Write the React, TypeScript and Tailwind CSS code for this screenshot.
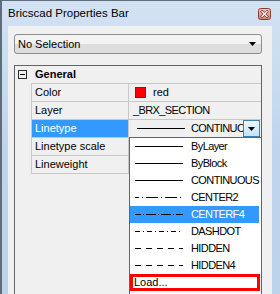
import React from 'react'

type LineType = { name: string; dash?: string; offset?: number; active?: boolean }

const lineTypes: LineType[] = [
  { name: 'ByLayer' },
  { name: 'ByBlock' },
  { name: 'CONTINUOUS' },
  { name: 'CENTER2', dash: '12 3 1 3', offset: 8 },
  { name: 'CENTERF4', dash: '10 2 1 2', offset: 4, active: true },
  { name: 'DASHDOT', dash: '5 3 1 3' },
  { name: 'HIDDEN', dash: '6 5' },
  { name: 'HIDDEN4', dash: '6 5' },
]

function LineSample({ dash, offset }: { dash?: string; offset?: number }) {
  return (
    <svg width="48" height="3" className="shrink-0" shapeRendering="crispEdges">
      <line
        x1="0"
        y1="1.5"
        x2="48"
        y2="1.5"
        stroke="#000"
        strokeWidth="1"
        strokeDasharray={dash}
        strokeDashoffset={offset}
      />
    </svg>
  )
}

function CloseButton() {
  return (
    <svg width="13" height="12" viewBox="0 0 13 12">
      <defs>
        <linearGradient id="cls" x1="0" y1="0" x2="0" y2="1">
          <stop offset="0" stopColor="#f3c6bc" />
          <stop offset="1" stopColor="#d9806f" />
        </linearGradient>
      </defs>
      <rect x="0.5" y="0.5" width="12" height="11" rx="2" fill="url(#cls)" stroke="#8a3b30" />
      <path d="M4 3.5 L9 8.5 M9 3.5 L4 8.5" stroke="#5a2a24" strokeWidth="2.6" strokeLinecap="square" />
      <path d="M4 3.5 L9 8.5 M9 3.5 L4 8.5" stroke="#fff" strokeWidth="1.3" strokeLinecap="square" />
    </svg>
  )
}

function Row({
  label,
  active,
  children,
}: {
  label: string
  active?: boolean
  children?: React.ReactNode
}) {
  return (
    <div className="flex h-[18px] border-b border-[#c8c8c8]">
      <div
        className={`flex w-[97px] shrink-0 items-center border-r border-[#c8c8c8] pl-[3px] ${
          active ? 'bg-[#3399ff] text-white' : ''
        }`}
      >
        {label}
      </div>
      <div className="relative flex min-w-0 flex-1 items-center">{children}</div>
    </div>
  )
}

export default function App() {
  return (
    <div className="flex h-[294px] w-[280px] flex-col overflow-hidden border-t border-l-2 border-[#5d6d7e] bg-gradient-to-b from-[#d3e2f3] via-[#bfd5ed] to-[#bcd3ec] font-['Liberation_Sans',Arial,sans-serif] text-[11px] text-black">
      {/* caption */}
      <div className="flex h-[25px] shrink-0 items-center justify-between pr-[9px] pl-[6px]">
        <span className="text-[11.5px]">Bricscad Properties Bar</span>
        <CloseButton />
      </div>

      {/* body */}
      <div className="mr-[8px] ml-[6px] flex min-h-0 flex-1 flex-col bg-[#f0f0f0] pt-[8px] pr-[10px] pl-[6px]">
        <div className="flex h-[20px] shrink-0 items-center justify-between rounded-[3px] border border-[#8e8f8f] bg-gradient-to-b from-[#f3f3f3] from-50% to-[#dddddd] to-50% pr-[5px] pl-[3px]">
          <span>No Selection</span>
          <svg width="7" height="4" viewBox="0 0 7 4">
            <path d="M0 0 H7 L3.5 4 Z" fill="#000" />
          </svg>
        </div>

        <div className="mt-[11px] flex flex-1 flex-col border-t border-r border-l border-[#646464]">
          <div className="flex h-[17px] items-center pl-[3px]">
            <div className="flex h-[9px] w-[9px] items-center justify-center border border-[#2b2b2b]">
              <div className="h-px w-[5px] bg-black" />
            </div>
            <span className="ml-[8px] font-bold">General</span>
          </div>

          <div className="ml-[16px] border-t border-l border-[#c8c8c8]">
            <Row label="Color">
              <div className="ml-[6px] h-[11px] w-[11px] border border-[#3a3a3a] bg-[#ff0000]" />
              <span className="ml-[7px]">red</span>
            </Row>
            <Row label="Layer">
              <span className="pl-[4px] tracking-[-0.6px]">_BRX_SECTION</span>
            </Row>
            <Row label="Linetype" active>
              <div className="flex min-w-0 flex-1 items-center overflow-hidden pl-[8px]">
                <LineSample />
                <span className="ml-[6px] whitespace-nowrap tracking-[-0.6px]">CONTINUOUS</span>
              </div>
              <div className="mr-[1px] flex h-[17px] w-[17px] shrink-0 items-center justify-center border border-[#3c7fb1] bg-gradient-to-b from-[#eaf6fd] to-[#c4e3f8]">
                <svg width="7" height="4" viewBox="0 0 7 4">
                  <path d="M0 0 H7 L3.5 4 Z" fill="#000" />
                </svg>
              </div>

              <div className="absolute top-[17px] left-[0px] z-10 w-[133px] border border-[#646464] bg-white pb-[4px]">
                {lineTypes.map((t) => (
                  <div
                    key={t.name}
                    className={`mr-[2px] flex h-[17px] items-center gap-[8px] pl-[5px] ${
                      t.active ? 'bg-[#3399ff] text-white' : ''
                    }`}
                  >
                    <LineSample dash={t.dash} offset={t.offset} />
                    <span className="whitespace-nowrap tracking-[-0.6px]">{t.name}</span>
                  </div>
                ))}
                <div className="mr-[1px] flex h-[17px] items-center border-[3px] border-[#ff0000] pl-[1px]">
                  Load...
                </div>
              </div>
            </Row>
            <Row label="Linetype scale" />
            <Row label="Lineweight" />
          </div>
        </div>
      </div>
    </div>
  )
}
